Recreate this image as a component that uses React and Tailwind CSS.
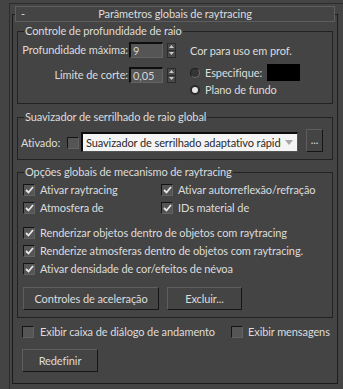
import React from 'react';

// small 3ds max style widgets
function Check({ checked }) {
  return (
    <span className="w-[12px] h-[12px] shrink-0 flex items-center justify-center bg-[#555555] border border-[#141414] border-r-[#626262] border-b-[#626262]">
      {checked && (
        <svg width="9" height="8" viewBox="0 0 9 8">
          <path d="M1 4 L3.5 6.5 L8 1" stroke="#e8e8e8" strokeWidth="1.8" fill="none" />
        </svg>
      )}
    </span>
  );
}

function Radio({ checked }) {
  return checked ? (
    <span className="w-[10px] h-[10px] shrink-0 rounded-full bg-[#e6e6e6] border-2 border-[#2a2a2a]" />
  ) : (
    <span className="w-[10px] h-[10px] shrink-0 rounded-full bg-[#353535] border border-[#1c1c1c] border-b-[#6a6a6a] border-r-[#6a6a6a]" />
  );
}

function Spinner() {
  return (
    <span className="w-[9px] h-[15px] shrink-0 flex flex-col border border-[#2a2a2a] bg-[#4a4a4a]">
      <span className="flex-1 flex items-center justify-center border-b border-[#2a2a2a]">
        <svg width="5" height="3" viewBox="0 0 5 3"><path d="M0 3 L2.5 0 L5 3 Z" fill="#c8c8c8" /></svg>
      </span>
      <span className="flex-1 flex items-center justify-center">
        <svg width="5" height="3" viewBox="0 0 5 3"><path d="M0 0 L2.5 3 L5 0 Z" fill="#c8c8c8" /></svg>
      </span>
    </span>
  );
}

function Field({ value }) {
  return (
    <span className="w-[34px] h-[16px] flex items-center pl-[2px] bg-[#555555] border-t-2 border-l-2 border-[#0e0e0e] border-r border-b border-r-[#636363] border-b-[#636363] text-[#d4d4d4]">
      {value}
    </span>
  );
}

function Btn({ children, className }) {
  return (
    <button className={`h-[23px] flex items-center justify-center bg-[#444444] border border-[#5e5e5e] border-r-[#161616] border-b-[#161616] text-[#dcdcdc] whitespace-nowrap ${className}`}>
      {children}
    </button>
  );
}

function Group({ title, className, children }) {
  return (
    <fieldset className={`min-w-0 mx-[4px] border border-[#222222] ${className}`}>
      <legend className="ml-[6px] px-[1px] leading-[14px] text-[#dcdcdc] whitespace-nowrap">{title}</legend>
      {children}
    </fieldset>
  );
}

function CheckRow({ label, checked }) {
  return (
    <div className="flex items-center gap-[5px] h-[18px] whitespace-nowrap overflow-hidden">
      <Check checked={checked} />
      <span>{label}</span>
    </div>
  );
}

export default function App() {
  return (
    <div className="w-[343px] h-[389px] overflow-hidden bg-[#444444] pt-[3px] pl-[9px] font-['Lato',sans-serif] text-[11px] tracking-[-0.1px] leading-[14px] text-[#dcdcdc]">
      <div className="h-full border-l border-t border-[#2c2c2c] pl-[2px] pt-[10px]">
        <div className="w-[326px] h-[370px] border border-[#1c1c1c] flex flex-col">
          {/* rollout header */}
          <div className="-mt-[9px] mx-[2px] h-[16px] flex items-center border border-[#5e5e5e] bg-[#444444]">
            <span className="w-[20px] pl-[5px]">-</span>
            <span className="flex-1 text-center pr-[20px]">Parâmetros globais de raytracing</span>
          </div>

          {/* ray depth */}
          <Group title="Controle de profundidade de raio" className="mt-[2px]">
            <div className="h-[65px] flex">
              <div className="flex flex-col gap-[9px] pt-[4px]">
                <div className="flex items-center h-[16px]">
                  <span className="w-[111px] text-right pr-[1px] whitespace-nowrap">Profundidade máxima:</span>
                  <Field value="9" />
                  <span className="ml-[4px]"><Spinner /></span>
                </div>
                <div className="flex items-center h-[16px]">
                  <span className="w-[111px] text-right pr-[1px] whitespace-nowrap">Limite de corte:</span>
                  <Field value="0,05" />
                  <span className="ml-[4px]"><Spinner /></span>
                </div>
              </div>
              <div className="ml-[14px] flex flex-col whitespace-nowrap">
                <span className="mt-[6px]">Cor para uso em prof.</span>
                <div className="mt-[6px] h-[17px] flex items-center">
                  <Radio />
                  <span className="ml-[5px]">Especifique:</span>
                  <span className="ml-[5px] w-[33px] h-[17px] bg-black" />
                </div>
                <div className="mt-[2px] flex items-center">
                  <Radio checked />
                  <span className="ml-[5px]">Plano de fundo</span>
                </div>
              </div>
            </div>
          </Group>

          {/* antialiaser */}
          <Group title="Suavizador de serrilhado de raio global" className="mt-[6px]">
            <div className="h-[35px] flex items-start pl-[3px] pt-[5px]">
              <span className="mt-[7px] w-[44px] whitespace-nowrap">Ativado:</span>
              <span className="mt-[8px] ml-[2px]"><Check /></span>
              <div className="mt-[3px] ml-[2px] w-[217px] h-[20px] flex items-center bg-[#f4f4f4] border-t-2 border-l-2 border-[#0c0c0c] border-r border-b border-r-[#555] border-b-[#555] text-[#2a2a2a] overflow-hidden">
                <span className="flex-1 min-w-0 pl-[3px] whitespace-nowrap overflow-hidden">Suavizador de serrilhado adaptativo rápido</span>
                <span className="w-[16px] shrink-0 flex justify-center">
                  <svg width="8" height="5" viewBox="0 0 8 5"><path d="M0 0 L8 0 L4 5 Z" fill="#a8a8a8" /></svg>
                </span>
              </div>
              <Btn className="ml-[8px] w-[17px] h-[20px] leading-none pb-[3px]">...</Btn>
            </div>
          </Group>

          {/* engine options */}
          <Group title="Opções globais de mecanismo de raytracing" className="mt-[5px]">
            <div className="pl-[5px] pt-[2px] pb-[7px]">
              <div className="grid grid-cols-[138px_1fr]">
                <CheckRow label="Ativar raytracing" checked />
                <CheckRow label="Ativar autorreflexão/refração" checked />
                <CheckRow label="Atmosfera de" checked />
                <CheckRow label="IDs material de" checked />
              </div>
              <div className="mt-[7px]">
                <CheckRow label="Renderizar objetos dentro de objetos com raytracing" checked />
                <CheckRow label="Renderize atmosferas dentro de objetos com raytracing." checked />
                <CheckRow label="Ativar densidade de cor/efeitos de névoa" checked />
              </div>
              <div className="mt-[9px] flex gap-[8px]">
                <Btn className="w-[136px]">Controles de aceleração</Btn>
                <Btn className="w-[75px]">Excluir...</Btn>
              </div>
            </div>
          </Group>

          <div className="mt-[7px] pl-[9px] flex items-center h-[14px] whitespace-nowrap">
            <Check />
            <span className="ml-[6px] w-[191px]">Exibir caixa de diálogo de andamento</span>
            <Check />
            <span className="ml-[5px]">Exibir mensagens</span>
          </div>

          <div className="mt-[10px] pl-[9px]">
            <Btn className="w-[76px]">Redefinir</Btn>
          </div>
        </div>
      </div>
    </div>
  );
}
